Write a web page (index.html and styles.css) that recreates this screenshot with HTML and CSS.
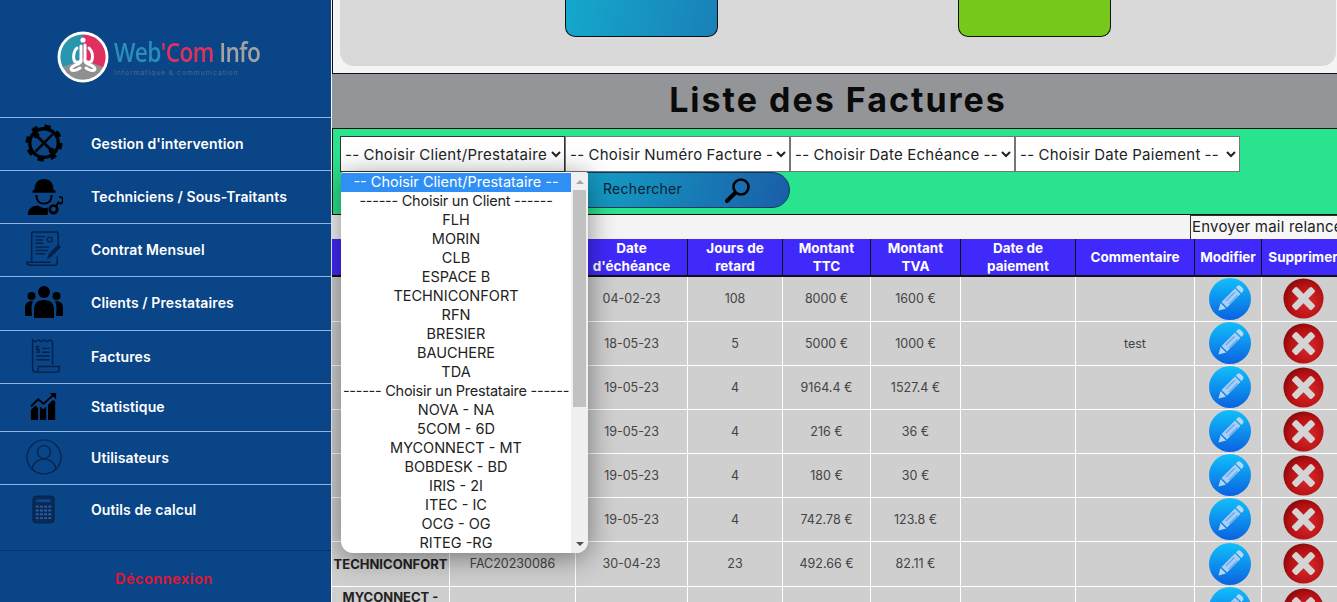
FILE: index.html
```html
<!DOCTYPE html>
<html lang="fr">
<head>
    <meta charset="UTF-8">
    <meta name="viewport" content="width=device-width, initial-scale=1.0">
    <title>Liste des Factures</title>
    <link rel="stylesheet" href="styles.css">
</head>
<body>

<svg class="defs" width="0" height="0">
    <defs>
        <linearGradient id="bleu" x1="0" y1="0" x2="0" y2="1">
            <stop offset="0" stop-color="#10c0fb"/>
            <stop offset="1" stop-color="#0a62e0"/>
        </linearGradient>
        <radialGradient id="rouge" cx="0.6" cy="0.6" r="0.6">
            <stop offset="0" stop-color="#d92a2a"/>
            <stop offset="0.8" stop-color="#b20f12"/>
            <stop offset="1" stop-color="#8f0c0e"/>
        </radialGradient>
        <symbol id="crayon" viewBox="0 0 42 42">
            <circle cx="21" cy="21" r="21" fill="url(#bleu)"/>
            <path d="M27 9.500l5.500 5.500 1.200-1.200a2.600 2.600 0 0 0 0-3.700l-1.800-1.800a2.600 2.600 0 0 0-3.700 0z" fill="#b8d6f5"/>
            <path d="M26 10.500l5.500 5.500-13.500 13.500-5.500-5.500z" fill="#a9cdf5"/>
            <path d="M17 23l8.500-8.500M20 26l8.500-8.500" stroke="#62a8f0" stroke-width="1.300"/>
            <path d="M11.500 25l5.500 5.500-7.500 2z" fill="#b8d6f5"/>
        </symbol>
        <symbol id="croix" viewBox="0 0 42 42">
            <circle cx="21" cy="21" r="20.500" fill="url(#rouge)"/>
            <path transform="translate(2.100 2.100) scale(.9)" d="M14 8.500l7 7 7-7a2 2 0 0 1 2.800 0l2.700 2.700a2 2 0 0 1 0 2.800l-7 7 7 7a2 2 0 0 1 0 2.800l-2.700 2.700a2 2 0 0 1-2.800 0l-7-7-7 7a2 2 0 0 1-2.800 0l-2.700-2.700a2 2 0 0 1 0-2.800l7-7-7-7a2 2 0 0 1 0-2.800l2.700-2.700a2 2 0 0 1 2.800 0z" fill="#d4d4d4"/>
        </symbol>
    </defs>
</svg>

<aside class="sidebar">
    <div class="logo">
        <svg class="logo-rond" width="52" height="52" viewBox="0 0 52 52">
            <circle cx="26" cy="26" r="25.500" fill="#fff"/>
            <path d="M26 3.500a22.500 22.500 0 0 0-20 33l20-7z" fill="#2a96ae"/>
            <path d="M26 3.500a22.500 22.500 0 0 1 20 33l-20-7z" fill="#e0305f"/>
            <path d="M6 36.500a22.500 22.500 0 0 0 40 0l-20-9z" fill="#8f8f8f"/>
            <g fill="none" stroke="#fff" stroke-width="3" stroke-linecap="round">
                <path d="M20 17c-3 2-4 8-3 12 1 3 6 3 7 0V15"/>
                <path d="M28 14v15c1 3 6 3 7 0 1-4 0-9-3-12"/>
                <path d="M24 30c0 4-9 3-10 8 1 3 6 1 9-1"/>
                <path d="M28 30c0 4 9 3 10 8-1 3-6 1-9-1"/>
            </g>
            <circle cx="26" cy="9" r="2.600" fill="#fff"/>
        </svg>
        <div class="logo-texte">
            <div class="logo-nom"><span class="l-bleu">Web</span><span class="l-rose">'Com</span> <span class="l-gris">Info</span></div>
            <div class="logo-sous">informatique &amp; communication</div>
        </div>
    </div>

    <nav class="menu">
        <a class="menu-item" href="#">
            <svg class="menu-icone" viewBox="0 0 40 40" width="38" height="38">
                <circle cx="20" cy="20" r="15" fill="none" stroke="#000" stroke-width="3.500"/>
                <circle cx="20" cy="20" r="17.500" fill="none" stroke="#000" stroke-width="4" stroke-dasharray="6.500 7.240"/>
                <path d="M12 12l16 16" stroke="#000" stroke-width="3"/>
                <path d="M29 11L11 29" stroke="#000" stroke-width="2.500"/>
                <circle cx="12" cy="12" r="3" fill="#000"/>
                <circle cx="28" cy="28" r="3" fill="#000"/>
            </svg>
            <span>Gestion d'intervention</span>
        </a>
        <a class="menu-item" href="#">
            <svg class="menu-icone" viewBox="0 0 40 40" width="38" height="38">
                <path d="M10 13c0-7 4-11 10-11s10 4 10 11v1h2v2.500H8V14h2z" fill="#000"/>
                <path d="M12 19c0 6 3 9 8 9s8-3 8-9" fill="none" stroke="#000" stroke-width="2"/>
                <path d="M3 40c0-6 3-9 10-10l7 3 4-1v8z" fill="#000"/>
                <circle cx="30" cy="34" r="4" fill="none" stroke="#000" stroke-width="2.800"/>
                <path d="M33 30l3-4" stroke="#000" stroke-width="2.200"/>
                <path d="M36 21a3.500 3.500 0 0 1 1 7l-2-1" fill="none" stroke="#000" stroke-width="2"/>
            </svg>
            <span>Techniciens / Sous-Traitants</span>
        </a>
        <a class="menu-item" href="#">
            <svg class="menu-icone" viewBox="0 0 40 40" width="38" height="38">
                <path d="M7 33V4c0-1 1-2 2-2h24c1 0 2 1 2 2v14M34 28v6c0 2-1 3-3 3H6c-3 0-4-1-4-3h25" fill="none" stroke="#06224a" stroke-width="1.600"/>
                <path d="M11 7h10M11 10.500h8M11 14h8M11 18h15M11 21.500h13M11 25h10" stroke="#06224a" stroke-width="1.500"/>
                <circle cx="26" cy="10" r="2.500" fill="none" stroke="#06224a" stroke-width="1.300"/>
                <path d="M23 31l2-6 10-10 3 3-10 10z" fill="#06224a"/>
            </svg>
            <span>Contrat Mensuel</span>
        </a>
        <a class="menu-item item-clients" href="#">
            <svg class="menu-icone" viewBox="0 0 40 40" width="40" height="40">
                <circle cx="20" cy="9" r="6" fill="#000"/>
                <circle cx="7.500" cy="13" r="4" fill="#000"/>
                <circle cx="32.500" cy="13" r="4" fill="#000"/>
                <path d="M10 35V26c0-6 4-9 10-9s10 3 10 9v9z" fill="#000"/>
                <path d="M8 33H2c-1 0-1-1-1-2v-6c0-5 3-7 7-7h1c-1 2-1.500 5-1.500 8zM32 33h6c1 0 1-1 1-2v-6c0-5-3-7-7-7h-1c1 2 1.500 5 1.500 8z" fill="#000"/>
            </svg>
            <span>Clients / Prestataires</span>
        </a>
        <a class="menu-item" href="#">
            <svg class="menu-icone" viewBox="0 0 40 40" width="38" height="38">
                <path d="M8 36V3l3 2 3-2 3 2 3-2 3 2 3-2 3 2v24M8 34c0 2 1 3 3 3h22c2 0 3-1 3-3v-3H14v3c0 2-2 3-3 3" fill="none" stroke="#06224a" stroke-width="1.500"/>
                <path d="M18 12h8M18 16h8M12 20h14M12 24h14" stroke="#06224a" stroke-width="1.500"/>
                <path d="M15 10h-3v3h3v3h-3M13.500 9v8" fill="none" stroke="#06224a" stroke-width="1.200"/>
            </svg>
            <span>Factures</span>
        </a>
        <a class="menu-item item-court" href="#">
            <svg class="menu-icone" viewBox="0 0 30 32" width="27" height="29">
                <path d="M1 31V20l5-5 3 3v13zM11 31V16l4 3 3-3v15zM20 31V14l5-5 3 1v21z" fill="#000"/>
                <path d="M1 16L9 8l6 5L26 3" fill="none" stroke="#000" stroke-width="2"/>
                <path d="M22 1h7v7z" fill="#000"/>
            </svg>
            <span>Statistique</span>
        </a>
        <a class="menu-item" href="#">
            <svg class="menu-icone" viewBox="0 0 36 36" width="36" height="36">
                <circle cx="18" cy="18" r="17" fill="none" stroke="#06224a" stroke-width="1.200"/>
                <circle cx="18" cy="13" r="6.500" fill="none" stroke="#06224a" stroke-width="1.200"/>
                <path d="M6 30c1-6 6-10 12-10s11 4 12 10" fill="none" stroke="#06224a" stroke-width="1.200"/>
            </svg>
            <span>Utilisateurs</span>
        </a>
        <a class="menu-item item-dernier" href="#">
            <svg class="menu-icone" viewBox="0 0 24 30" width="23" height="29">
                <rect x="1" y="1" width="22" height="28" rx="3" fill="#0a2a58" stroke="#06224a"/>
                <rect x="4" y="4" width="16" height="4" fill="#0d478c" stroke="#06224a" stroke-width=".7"/>
                <path d="M4 12h16M4 16h16M4 20h16M4 24h16" stroke="#2d5f9e" stroke-width="2" stroke-dasharray="3 1.330"/>
            </svg>
            <span>Outils de calcul</span>
        </a>
    </nav>

    <a class="deconnexion" href="#">Déconnexion</a>
</aside>

<main class="contenu">
    <section class="haut">
        <div class="panneau">
            <div class="carte carte-bleue"></div>
            <div class="carte carte-verte"></div>
        </div>
    </section>

    <h1 class="titre">Liste des Factures</h1>

    <form class="filtres">
        <div class="filtres-ligne">
            <select class="filtre filtre-actif">
                <option>-- Choisir Client/Prestataire --</option>
            </select>
            <select class="filtre">
                <option>-- Choisir Numéro Facture --</option>
            </select>
            <select class="filtre">
                <option>-- Choisir Date Echéance --</option>
            </select>
            <select class="filtre">
                <option>-- Choisir Date Paiement --</option>
            </select>
        </div>
        <button type="button" class="rechercher">
            <span class="rechercher-texte">Rechercher</span>
            <svg width="28" height="28" viewBox="0 0 28 28">
                <circle cx="17" cy="11" r="7.500" fill="none" stroke="#000" stroke-width="2.600"/>
                <path d="M11 17l-8 8" stroke="#000" stroke-width="4" stroke-linecap="round"/>
            </svg>
        </button>

        <!-- liste du select ouverte -->
        <div class="liste">
            <ul class="liste-options">
                <li class="option-active">-- Choisir Client/Prestataire --</li>
                <li class="separateur">------ Choisir un Client ------</li>
                <li>FLH</li>
                <li>MORIN</li>
                <li>CLB</li>
                <li>ESPACE B</li>
                <li>TECHNICONFORT</li>
                <li>RFN</li>
                <li>BRESIER</li>
                <li>BAUCHERE</li>
                <li>TDA</li>
                <li class="separateur">------ Choisir un Prestataire ------</li>
                <li>NOVA - NA</li>
                <li>5COM - 6D</li>
                <li>MYCONNECT - MT</li>
                <li>BOBDESK - BD</li>
                <li>IRIS - 2I</li>
                <li>ITEC - IC</li>
                <li>OCG - OG</li>
                <li>RITEG -RG</li>
            </ul>
            <div class="ascenseur">
                <span class="fleche fleche-haut"></span>
                <span class="curseur"></span>
                <span class="fleche fleche-bas"></span>
            </div>
        </div>
    </form>

    <div class="bloc-table">
        <div class="barre-relance">
            <button type="button" class="relance">Envoyer mail relance</button>
        </div>
        <table class="factures">
            <colgroup>
                <col class="c-client"><col class="c-num"><col class="c-date"><col class="c-jours">
                <col class="c-ttc"><col class="c-tva"><col class="c-paie"><col class="c-comm">
                <col class="c-modif"><col class="c-suppr">
            </colgroup>
            <thead>
                <tr>
                    <th>Client</th><th>Numéro</th><th>Date d'échéance</th><th>Jours de retard</th>
                    <th>Montant TTC</th><th>Montant TVA</th><th>Date de paiement</th><th>Commentaire</th>
                    <th>Modifier</th><th>Supprimer</th>
                </tr>
            </thead>
            <tbody>
                <tr class="ligne-haute">
                    <td></td><td></td><td>04-02-23</td><td>108</td><td>8000 €</td><td>1600 €</td><td></td><td></td>
                    <td><svg class="ico-modif"><use href="#crayon"/></svg></td><td><svg class="ico-suppr"><use href="#croix"/></svg></td>
                </tr>
                <tr>
                    <td></td><td></td><td>18-05-23</td><td>5</td><td>5000 €</td><td>1000 €</td><td></td><td>test</td>
                    <td><svg class="ico-modif"><use href="#crayon"/></svg></td><td><svg class="ico-suppr"><use href="#croix"/></svg></td>
                </tr>
                <tr>
                    <td></td><td></td><td>19-05-23</td><td>4</td><td>9164.4 €</td><td>1527.4 €</td><td></td><td></td>
                    <td><svg class="ico-modif"><use href="#crayon"/></svg></td><td><svg class="ico-suppr"><use href="#croix"/></svg></td>
                </tr>
                <tr>
                    <td></td><td></td><td>19-05-23</td><td>4</td><td>216 €</td><td>36 €</td><td></td><td></td>
                    <td><svg class="ico-modif"><use href="#crayon"/></svg></td><td><svg class="ico-suppr"><use href="#croix"/></svg></td>
                </tr>
                <tr>
                    <td></td><td></td><td>19-05-23</td><td>4</td><td>180 €</td><td>30 €</td><td></td><td></td>
                    <td><svg class="ico-modif"><use href="#crayon"/></svg></td><td><svg class="ico-suppr"><use href="#croix"/></svg></td>
                </tr>
                <tr>
                    <td></td><td></td><td>19-05-23</td><td>4</td><td>742.78 €</td><td>123.8 €</td><td></td><td></td>
                    <td><svg class="ico-modif"><use href="#crayon"/></svg></td><td><svg class="ico-suppr"><use href="#croix"/></svg></td>
                </tr>
                <tr class="ligne-haute">
                    <td class="nom">TECHNICONFORT</td><td>FAC20230086</td><td>30-04-23</td><td>23</td><td>492.66 €</td><td>82.11 €</td><td></td><td></td>
                    <td><svg class="ico-modif"><use href="#crayon"/></svg></td><td><svg class="ico-suppr"><use href="#croix"/></svg></td>
                </tr>
                <tr>
                    <td class="nom nom-haut">MYCONNECT -</td><td></td><td></td><td></td><td></td><td></td><td></td><td></td>
                    <td><svg class="ico-modif"><use href="#crayon"/></svg></td><td><svg class="ico-suppr"><use href="#croix"/></svg></td>
                </tr>
            </tbody>
        </table>
    </div>
</main>

</body>
</html>
```

FILE: styles.css
```css
* {
    box-sizing: border-box;
}

html, body {
    height: 100%;
}

body {
    display: flex;
    margin: 0;
    height: 100vh;
    overflow: hidden;
    background-color: #f4f4f4;
    font-family: Inter, "Open Sans", sans-serif;
    color: #222;
}

.defs {
    position: absolute;
}

/* Barre de gauche */
.sidebar {
    display: flex;
    flex-direction: column;
    flex: 0 0 331px;
    background-color: #0a4587;
    color: #fff;
}

.logo {
    display: flex;
    align-items: center;
    height: 117px;
    padding: 0 0 3px 57px;
    gap: 5px;
}

.logo-rond {
    flex: none;
    filter: blur(0.3px);
}

.logo-nom {
    font-family: "Open Sans", sans-serif;
    font-size: 27px;
    font-weight: 600;
    line-height: 28px;
    letter-spacing: -0.7px;
    white-space: nowrap;
    transform: scaleX(0.84);
    transform-origin: left center;
    filter: blur(0.3px);
}

.l-bleu { color: #2a8fb8; }
.l-rose { color: #e0325f; }
.l-gris { color: #a3a3a3; }

.logo-sous {
    margin-top: 3px;
    font-size: 6.500px;
    line-height: 8px;
    letter-spacing: 1.100px;
    color: #4f6c94;
    white-space: nowrap;
}

.menu {
    flex: 1;
}

.menu-item {
    display: grid;
    grid-template-columns: 87px 1fr;
    column-gap: 4px;
    align-items: center;
    height: 53px;
    padding-bottom: 2px;
    border-top: 1px solid #8fb3de;
    color: #fff;
    font-size: 14px;
    font-weight: 600;
    letter-spacing: 0.1px;
    text-decoration: none;
}

.menu-icone {
    justify-self: center;
}

.item-clients {
    height: 54px;
}

.item-court {
    height: 48px;
}

.item-dernier {
    height: 65px;
    padding-bottom: 15px;
}

.deconnexion {
    display: block;
    height: 52px;
    padding-top: 19px;
    padding-left: 115px;
    border-top: 1px dotted #06224a;
    color: #e8132f;
    font-size: 14.500px;
    font-weight: 600;
    letter-spacing: 0.5px;
    text-decoration: none;
}

/* Partie droite */
.contenu {
    flex: 1;
    min-width: 0;
    overflow: hidden;
    padding-left: 1px;
}

.haut {
    height: 74px;
    padding-left: 7px;
    padding-right: 1px;
    border-left: 1px solid #111;
    border-bottom: 1px solid #111;
}

.panneau {
    display: flex;
    height: 66px;
    padding-left: 225px;
    gap: 240px;
    background-color: #d9d9d9;
    border-radius: 0 0 14px 14px;
}

.carte {
    width: 153px;
    height: 37px;
    border: 1px solid #111;
    border-top: none;
    border-radius: 0 0 10px 10px;
}

.carte-bleue {
    background: linear-gradient(100deg, #14a8cc, #1a80b8);
}

.carte-verte {
    background-color: #76c91a;
}

.titre {
    margin: 0;
    height: 54px;
    padding-left: 7px;
    background-color: #949599;
    color: #0a0a0a;
    font-size: 34px;
    font-weight: 700;
    line-height: 52px;
    letter-spacing: 2px;
    text-align: center;
}

.filtres {
    position: relative;
    height: 87px;
    padding: 7px 0 0 7px;
    background-color: #2ae38e;
    border: 1px solid #111;
    border-right: none;
}

.filtres-ligne {
    display: flex;
}

.filtre {
    width: 225px;
    height: 36px;
    padding: 0;
    background-color: #fff;
    border: 1px solid #767676;
    font-family: inherit;
    font-size: 15px;
    letter-spacing: 0.3px;
    word-spacing: -0.5px;
    color: #222;
}

.filtre-actif {
    border-color: #333;
}

.rechercher {
    display: flex;
    align-items: center;
    justify-content: space-between;
    width: 225px;
    height: 36px;
    margin-left: 225px;
    padding: 0 37px;
    background: linear-gradient(100deg, #14a5c8, #1a5ea8);
    border: 1px solid #0c3a60;
    border-radius: 18px;
    font-family: inherit;
    font-size: 14px;
    letter-spacing: 0.3px;
    color: #0b2030;
}

.rechercher-texte {
    padding-bottom: 3px;
}

/* Liste déroulante ouverte */
.liste {
    position: absolute;
    top: 43px;
    left: 8px;
    z-index: 5;
    display: flex;
    width: 247px;
    height: 381px;
    background-color: #fff;
    border-radius: 3px 3px 12px 12px;
    box-shadow: 0 4px 28px rgba(0, 0, 0, 0.45);
    overflow: hidden;
}

.liste-options {
    flex: 1;
    min-width: 0;
    margin: 0;
    padding: 1px 0 0;
    list-style: none;
    font-size: 14.500px;
    text-align: center;
    white-space: nowrap;
}

.liste-options li {
    height: 19px;
    line-height: 18px;
}

.liste-options .separateur {
    letter-spacing: -0.25px;
}

.option-active {
    background-color: #2f8ff5;
    color: #fff;
}

.ascenseur {
    display: flex;
    flex-direction: column;
    align-items: center;
    flex: 0 0 17px;
    padding-top: 8px;
    background-color: #f0f0f0;
}

.fleche {
    flex: none;
    width: 0;
    height: 0;
    border-left: 4px solid transparent;
    border-right: 4px solid transparent;
}

.fleche-haut {
    border-bottom: 4px solid #a5a5a5;
}

.fleche-bas {
    margin-top: 135px;
    border-top: 4px solid #505050;
}

.curseur {
    flex: none;
    width: 13px;
    height: 217px;
    margin-top: 6px;
    background-color: #c1c1c1;
}

/* Tableau */
.bloc-table {
    width: 1013px;
}

.barre-relance {
    display: flex;
    justify-content: flex-end;
    height: 24px;
    background-color: #f4f4f4;
}

.relance {
    width: 155px;
    height: 24px;
    padding: 0 0 3px 1px;
    background-color: #f7f7f7;
    border: 1px solid #333;
    border-right: none;
    border-bottom: none;
    font-family: inherit;
    font-size: 15px;
    letter-spacing: 0.2px;
    color: #222;
    text-align: left;
    white-space: nowrap;
}

.factures {
    width: 1013px;
    table-layout: fixed;
    border-collapse: separate;
    border-spacing: 0;
    background-color: #cfcfcf;
    font-size: 12.500px;
    color: #444;
}

.c-client { width: 118px; }
.c-num { width: 126px; }
.c-date { width: 112px; }
.c-jours { width: 95px; }
.c-ttc { width: 88px; }
.c-tva { width: 90px; }
.c-paie { width: 115px; }
.c-comm { width: 119px; }
.c-modif { width: 67px; }
.c-suppr { width: 83px; }

.factures th {
    height: 38px;
    padding: 0 2px;
    background-color: #4029fb;
    border-right: 1px solid #111;
    border-bottom: 2px solid #111;
    color: #fff;
    font-size: 13.500px;
    font-weight: 700;
    line-height: 18px;
    text-align: center;
}

.factures th:nth-child(5),
.factures th:nth-child(6) {
    padding: 0 10px;
}

.factures td {
    height: 44px;
    padding: 0 0 1px;
    border-right: 1px solid #fff;
    border-bottom: 1px solid #fff;
    text-align: center;
    vertical-align: middle;
}

.factures .ligne-haute td {
    height: 45px;
}

.factures .nom {
    font-weight: 700;
    font-size: 13px;
    color: #222;
    white-space: nowrap;
}

.factures .nom-haut {
    vertical-align: top;
    padding-top: 2px;
}

.ico-modif {
    display: block;
    width: 42px;
    height: 42px;
    margin: 0 0 0 14px;
}

.ico-suppr {
    display: block;
    width: 41px;
    height: 41px;
    margin: 0 auto;
}
```
